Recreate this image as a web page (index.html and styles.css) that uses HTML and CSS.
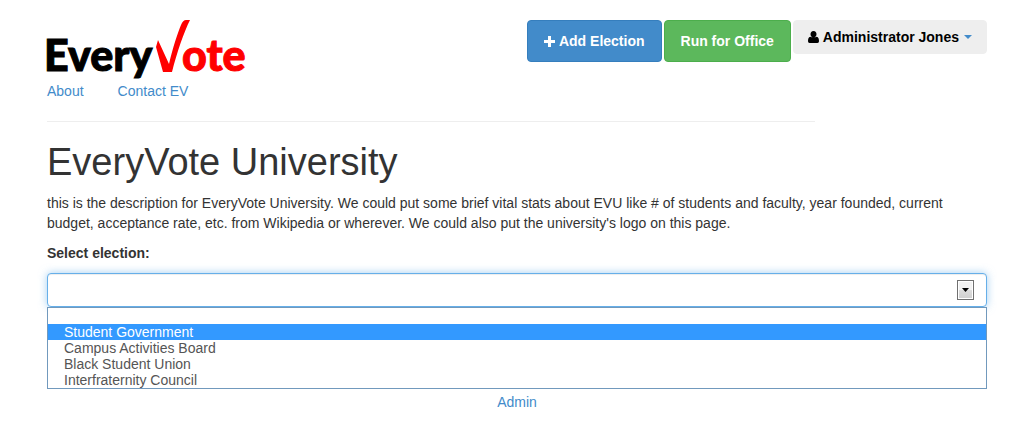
FILE: index.html
```html
<!DOCTYPE html>
<html lang="en">
<head>
<meta charset="utf-8">
<title>EveryVote University</title>
<link rel="stylesheet" href="styles.css">
</head>
<body>
<div class="container">
  <header class="header">
    <div class="brand">
      <a class="logo" href="#" aria-label="EveryVote">
        <svg width="208" height="61" viewBox="-4 0 208 61">
          <text class="logo-text" x="-3" y="51">Every</text>
          <path class="logo-check" d="M111 20L122 44C126 27 131 12 134 5Q136 0 139 0L143 0C137 12 130 32 125 52L116 52L109 27Z"/>
          <text class="logo-text logo-red" x="135" y="51">ote</text>
        </svg>
      </a>
      <nav class="links">
        <a href="#">About</a>
        <a href="#">Contact EV</a>
      </nav>
    </div>
    <div class="actions">
      <button class="btn btn-primary" type="button"><svg class="icon" width="11" height="11" viewBox="0 0 11 11"><path d="M4 0h3v4h4v3H7v4H4V7H0V4h4z"/></svg>Add Election</button>
      <button class="btn btn-success" type="button">Run for Office</button>
      <button class="btn btn-user" type="button"><svg class="icon" width="11" height="12" viewBox="0 0 11 12"><path d="M5.500 0C7.500 0 8.500 1.300 8.500 3.200S7.300 6.500 5.500 6.500 2.500 5.100 2.500 3.200 3.500 0 5.500 0zM2.300 5.800Q3.500 6.500 5.500 6.500T8.700 5.800C10.500 6.300 11 8 11 10.300Q11 12 9.500 12H1.500Q0 12 0 10.300C0 8 .5 6.300 2.300 5.800z"/></svg>Administrator Jones<span class="caret"></span></button>
    </div>
  </header>
  <hr class="rule">
  <main>
    <h1 class="title">EveryVote University</h1>
    <p class="description">this is the description for EveryVote University. We could put some brief vital stats about EVU like # of students and faculty, year founded, current budget, acceptance rate, etc. from Wikipedia or wherever. We could also put the university's logo on this page.</p>
    <label class="label" for="election">Select election:</label>
    <div class="dropdown">
      <select class="select" id="election">
        <option></option>
      </select>
      <span class="arrow"><svg width="7" height="4" viewBox="0 0 7 4"><path d="M0 0h7L3.500 4z"/></svg></span>
      <ul class="menu" role="listbox" aria-label="Elections">
        <li class="item" role="option"></li>
        <li class="item active" role="option" aria-selected="true">Student Government</li>
        <li class="item" role="option">Campus Activities Board</li>
        <li class="item" role="option">Black Student Union</li>
        <li class="item" role="option">Interfraternity Council</li>
      </ul>
    </div>
  </main>
  <footer class="footer"><a href="#">Admin</a></footer>
</div>
</body>
</html>
```
FILE: styles.css
```css
* { box-sizing: border-box; }
body {
  margin: 0;
  background: #fff;
  color: #333;
  font: 14px/20px "Liberation Sans", Arial, sans-serif;
}
a { color: #428bca; text-decoration: none; }
.container { padding: 20px 46px 14px 47px; }
.header { display: flex; justify-content: space-between; align-items: flex-start; }
.logo, .logo svg { display: block; }
.logo { margin-left: -4px; }
.logo-text { font: 900 43px Lato, sans-serif; fill: #000; stroke: #000; stroke-width: 1px; }
.logo-red, .logo-check { fill: #f00; }
.logo-red { stroke: #f00; }
.links { display: flex; gap: 34px; }
.actions { display: flex; align-items: flex-start; gap: 2px; }
.btn {
  display: flex;
  align-items: center;
  gap: 4px;
  padding: 10px 16px;
  border: 1px solid;
  border-radius: 4px;
  color: #fff;
  font: bold 14px/20px "Liberation Sans", Arial, sans-serif;
  white-space: nowrap;
}
.icon { fill: currentColor; }
.btn-primary { background: #428bca; border-color: #357ebd; }
.btn-success { background: #5cb85c; border-color: #4cae4c; }
.btn-user { padding: 6px 14px; background: #eee; border-color: #eee; color: #000; }
.caret {
  margin-left: 1px;
  border: 4px solid transparent;
  border-top-color: #428bca;
  border-bottom: 0;
}
.rule { width: 100%; max-width: 768px; margin: 20px 0; border: 0; border-top: 1px solid #eee; }
.title { margin: 0 0 11px; font-size: 38px; line-height: 40px; font-weight: normal; }
.description { margin: 0 0 10px; }
.label { display: block; margin-bottom: 10px; font-weight: bold; }
.dropdown { position: relative; }
.select {
  display: block;
  width: 100%;
  height: 34px;
  padding: 6px 12px;
  appearance: none;
  background: #fff;
  border: 1px solid #66afe9;
  border-radius: 4px;
  box-shadow: inset 0 1px 1px rgba(0, 0, 0, .075), 0 0 8px rgba(102, 175, 233, .6);
  font: inherit;
}
.arrow {
  position: absolute;
  top: 7px;
  right: 13px;
  display: flex;
  align-items: center;
  justify-content: center;
  width: 17px;
  height: 20px;
  border: 1px solid #707070;
  background: linear-gradient(#f2f2f2 50%, #ddd 50%, #cfcfcf);
  box-shadow: inset 0 0 0 1px #fff;
  pointer-events: none;
}
.menu {
  position: absolute;
  top: 100%;
  left: 0;
  right: 0;
  margin: 0;
  padding: 0;
  list-style: none;
  background: #fff;
  border: 1px solid #7199bd;
}
.item { height: 16px; padding: 0 16px; color: #555; line-height: 16px; }
.active { background: #39f; color: #fff; }
.footer { margin-top: 85px; text-align: center; }
```
